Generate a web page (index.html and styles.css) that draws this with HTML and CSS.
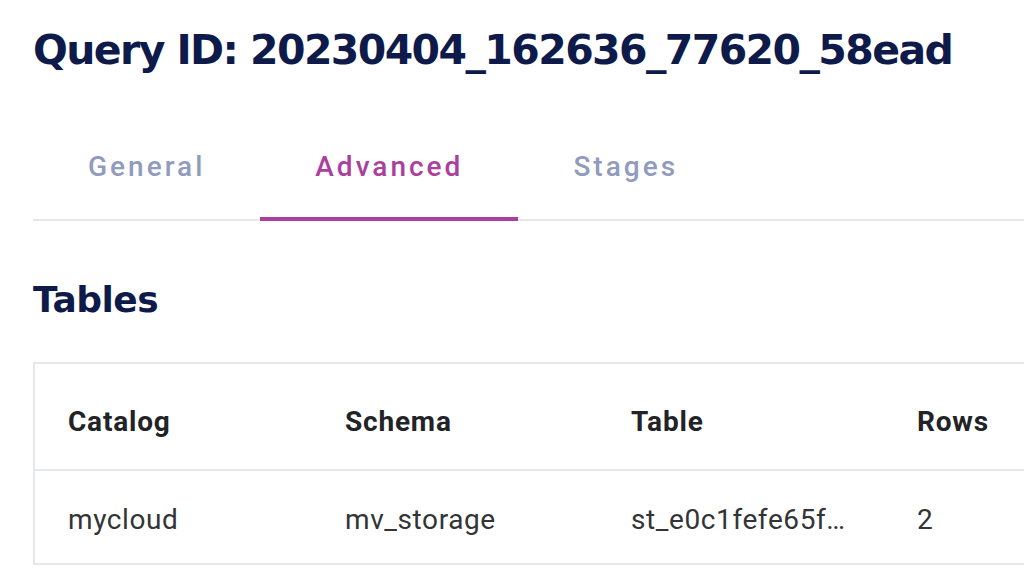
FILE: index.html
```html
<!DOCTYPE html>
<html>
<head>
<meta charset="utf-8">
<link rel="stylesheet" href="styles.css">
</head>
<body>
<div class="page">
  <h1 class="title">Query ID: 20230404_162636_77620_58ead</h1>
  <nav class="tabs">
    <div class="tab">General</div>
    <div class="tab active">Advanced</div>
    <div class="tab">Stages</div>
  </nav>
  <h2 class="section">Tables</h2>
  <div class="table-wrap">
    <table class="data">
      <thead>
        <tr><th>Catalog</th><th>Schema</th><th>Table</th><th>Rows</th></tr>
      </thead>
      <tbody>
        <tr><td>mycloud</td><td>mv_storage</td><td>st_e0c1fefe65f…</td><td>2</td></tr>
      </tbody>
    </table>
  </div>
</div>
</body>
</html>
```
FILE: styles.css
```css
html, body {
  margin: 0;
  padding: 0;
  background: #ffffff;
  overflow: hidden;
}
.page {
  padding: 0 0 0 33px;
  width: 1400px;
}
.title {
  margin: 0;
  padding-top: 25px;
  font-family: "DejaVu Sans", sans-serif;
  font-weight: 700;
  font-size: 41px;
  line-height: 50px;
  color: #0d1a4a;
  letter-spacing: -1.6px;
}
.tabs {
  display: flex;
  margin-top: 75px;
  border-bottom: 2px solid #e7e8ef;
  width: 991px;
}
.tab {
  padding: 0 55px 33px;
  font-family: Roboto, sans-serif;
  font-weight: 500;
  font-size: 28px;
  line-height: 34px;
  letter-spacing: 3px;
  color: #919bbd;
  border-bottom: 4px solid transparent;
  margin-bottom: -2px;
}
.tab.active {
  color: #ac3f9e;
  border-bottom-color: #ac3f9e;
}
.section {
  margin: 57px 0 0;
  font-family: "DejaVu Sans", sans-serif;
  font-weight: 700;
  font-size: 36px;
  line-height: 44px;
  color: #0d1a4a;
  letter-spacing: -0.5px;
}
.table-wrap {
  margin-top: 40px;
  border: 2px solid #e5e7ec;
  width: 1300px;
}
.data {
  border-collapse: collapse;
  font-family: Roboto, sans-serif;
  font-size: 28px;
  width: 100%;
}
.data th, .data td {
  text-align: left;
  padding: 0 33px;
  white-space: nowrap;
}
.data th {
  height: 95px;
  padding-top: 10px;
  font-weight: 700;
  color: #222326;
  letter-spacing: 0.8px;
  border-bottom: 2px solid #e5e7ec;
}
.data td {
  height: 88px;
  padding-top: 4px;
  color: #333436;
  letter-spacing: 0.6px;
}
.data th:nth-child(1), .data td:nth-child(1) { width: 211px; }
.data th:nth-child(2), .data td:nth-child(2) { width: 220px; }
.data th:nth-child(3), .data td:nth-child(3) { width: 220px; }
```
